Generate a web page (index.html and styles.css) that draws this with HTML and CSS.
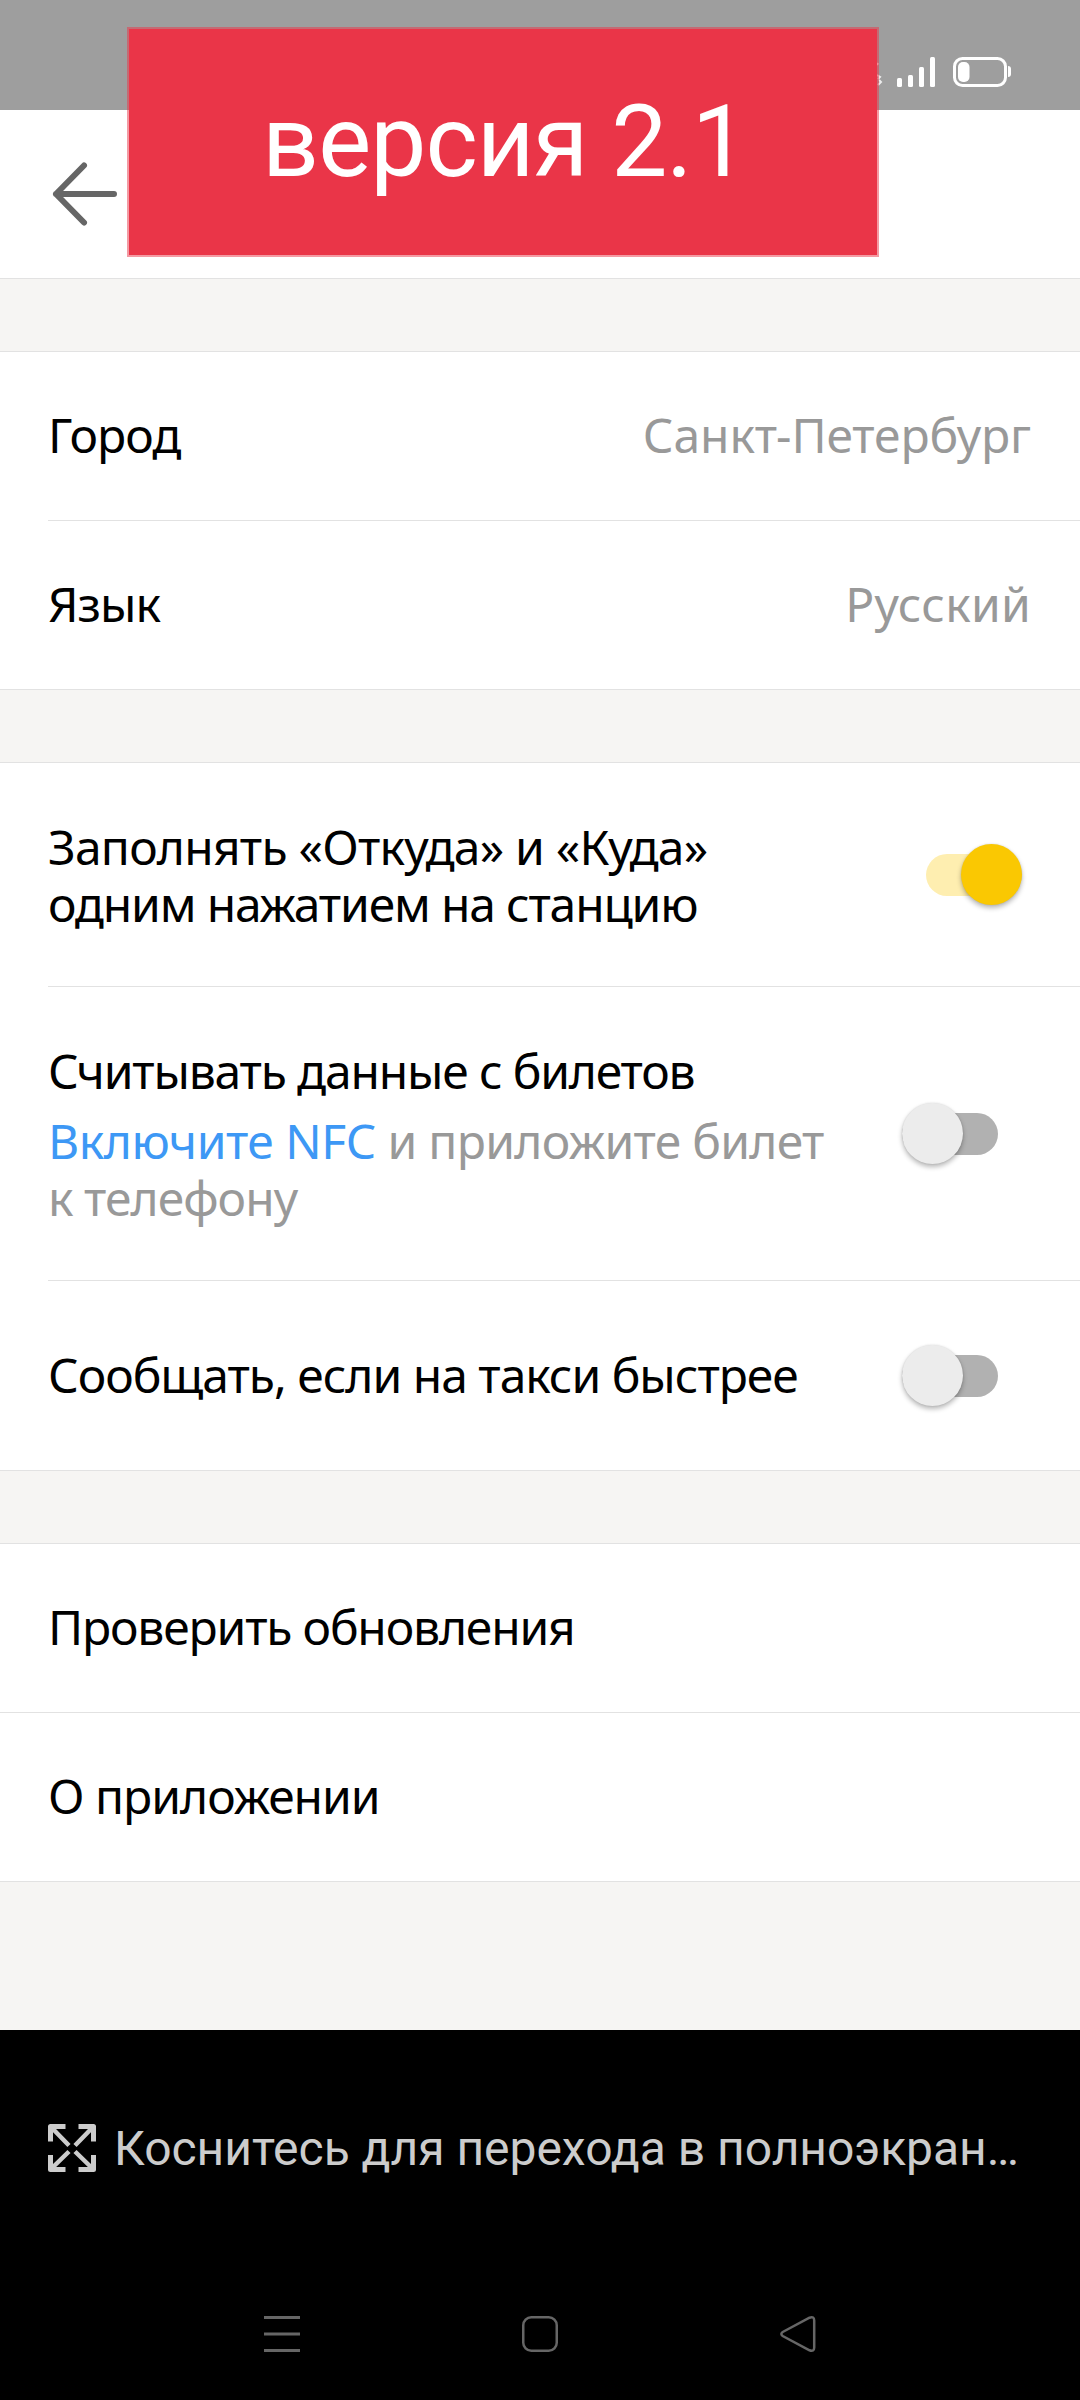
FILE: index.html
```html
<!DOCTYPE html>
<html lang="ru">
<head>
<meta charset="utf-8">
<title>Настройки</title>
<link rel="stylesheet" href="styles.css">
</head>
<body>
<div class="screen">
  <div class="status">
    <svg class="status-icons" width="145" height="34" viewBox="0 0 145 34" fill="#fff">
      <path d="M7 20l3 2-2 2M8 30l3-3-2-2M7 10l1-2" fill="none" stroke="#fff" stroke-opacity=".8" stroke-width="2"/>
      <rect x="27" y="23" width="5" height="9" rx="1.5"/>
      <rect x="38" y="20" width="5" height="12" rx="1.5"/>
      <rect x="49" y="12" width="5" height="20" rx="1.5"/>
      <rect x="60" y="2" width="5" height="30" rx="1.5"/>
      <rect x="84.5" y="3.5" width="51" height="27" rx="8" fill="none" stroke="#fff" stroke-width="3"/>
      <rect x="88" y="7" width="11.5" height="20" rx="5"/>
      <path d="M138 11q3 0 3 3v5q0 3 -3 3z"/>
    </svg>
  </div>
  <header class="toolbar">
    <svg class="back" width="70" height="70" viewBox="0 0 70 70" fill="none" stroke="#666" stroke-width="6" stroke-linecap="round" stroke-linejoin="round"><path d="M66 35H8M36 6.5L8 35L36 63.5"/></svg>
  </header>
  <div class="banner">версия 2.1</div>

  <section class="group">
    <div class="row row-text"><span class="label">Город</span><span class="value v-city">Санкт-Петербург</span></div>
    <div class="row row-text"><span class="label">Язык</span><span class="value v-lang">Русский</span></div>
  </section>

  <section class="group">
    <div class="row row-fill"><div class="label"><div class="fill-first">Заполнять «Откуда» и «Куда»</div><div class="tight">одним нажатием на станцию</div></div><span class="switch on"><i class="thumb"></i></span></div>
    <div class="row row-nfc"><div class="label"><div class="tight">Считывать данные с билетов</div><div class="hint"><a class="link">Включите NFC</a> и приложите билет<div class="hint-last">к телефону</div></div></div><span class="switch"><i class="thumb"></i></span></div>
    <div class="row row-taxi"><span class="label">Сообщать, если на такси быстрее</span><span class="switch"><i class="thumb"></i></span></div>
  </section>

  <section class="group full">
    <div class="row row-text"><span class="label tight">Проверить обновления</span></div>
    <div class="row row-text"><span class="label">О приложении</span></div>
  </section>

  <footer class="bottom">
    <div class="fullscreen">
      <svg width="48" height="48" viewBox="0 0 48 48" fill="none" stroke="#ccc" stroke-width="5"><path d="M17.500 2.500H2.500V17.500M30.500 2.500H45.500V17.500M17.500 45.500H2.500V31M30.500 45.500H45.500V31" stroke-linejoin="round"/><path d="M4 4L21 21.500M44 4L27 21.500M4 44L21 27.500M44 44L27 27.500" stroke-width="4.500"/></svg>
      <span>Коснитесь для перехода в полноэкран…</span>
    </div>
    <nav class="nav">
      <svg width="38" height="38" viewBox="0 0 38 38" fill="none" stroke="#666" stroke-width="3"><path d="M1 2.500H37M1 19H37M1 35.500H37"/></svg>
      <svg width="38" height="38" viewBox="0 0 38 38" fill="none" stroke="#666" stroke-width="2.500"><rect x="2.250" y="2.250" width="33.500" height="33.500" rx="8"/></svg>
      <svg width="38" height="38" viewBox="0 0 38 38" fill="none" stroke="#666" stroke-width="2.500"><path d="M3.700 17L30.500 2.700Q35.200 1 35.200 5.500V32.500Q35.200 37 30.500 35.300L3.700 21Q1 19 3.700 17Z"/></svg>
    </nav>
  </footer>
</div>
</body>
</html>
```
FILE: styles.css
```css
* { box-sizing: border-box; }
body { margin: 0; background: #f6f5f3; }
.screen { position: relative; width: 1080px; height: 2400px; display: flex; flex-direction: column; font-family: "Noto Sans", sans-serif; font-size: 48px; line-height: 57px; color: #000; overflow: hidden; }
.status { height: 110px; background: #9e9e9e; display: flex; justify-content: flex-end; padding: 55px 65px 0 0; }
.toolbar { height: 169px; background: #fff; border-bottom: 1px solid #e2e2e2; display: flex; padding: 49px 0 0 48px; }
.banner { position: absolute; left: 127px; top: 27px; width: 752px; height: 230px; padding-left: 3px; background: #ea3548; background-clip: padding-box; border: 2px solid rgba(234,53,72,.5); color: #fff; font: 100px/225px Roboto, sans-serif; letter-spacing: -1px; text-align: center; white-space: nowrap; }
.group { margin-top: 72px; background: #fff; border-top: 1px solid #e2e2e2; border-bottom: 1px solid #e2e2e2; }
.row { height: 168px; display: flex; align-items: center; justify-content: space-between; margin-left: 48px; padding-right: 49px; white-space: nowrap; }
.row + .row { border-top: 1px solid #e2e2e2; height: 169px; }
.row-text { padding-bottom: 3px; }
.full .row { margin-left: 0; padding-left: 48px; }
.label { letter-spacing: -1.02px; }
.tight { letter-spacing: -1.18px; }
.fill-first { letter-spacing: -.78px; }
.value { color: #999; }
.v-city { letter-spacing: -.1px; }
.v-lang { letter-spacing: .25px; }
.group .row-fill { height: 223px; }
.group .row-nfc { height: 294px; }
.group .row-taxi { height: 190px; }
.row-taxi .label { padding-bottom: 2px; }
.hint { color: #999; margin-top: 13px; letter-spacing: -.7px; }
.hint-last { letter-spacing: -.95px; }
.link { color: #3d98f5; letter-spacing: -.47px; }
.switch { flex: none; display: flex; align-items: center; width: 96px; height: 42px; border-radius: 21px; background: #b1b1b1; margin-right: 33px; }
.switch.on { background: #feeeb0; justify-content: flex-end; margin-right: 9px; }
.thumb { width: 61px; height: 61px; flex: none; border-radius: 50%; background: #ececec; box-shadow: 0 3px 5px rgba(0,0,0,.28), 0 0 2px rgba(0,0,0,.12); }
.on .thumb { background: #fac802; }
.bottom { margin-top: auto; height: 370px; background: #000; }
.fullscreen { display: flex; align-items: center; gap: 18px; height: 236px; padding-left: 48px; color: #ccc; font-family: Roboto, sans-serif; letter-spacing: -.03px; white-space: nowrap; }
.nav { display: flex; justify-content: space-between; padding: 49px 263px 0; }
```
